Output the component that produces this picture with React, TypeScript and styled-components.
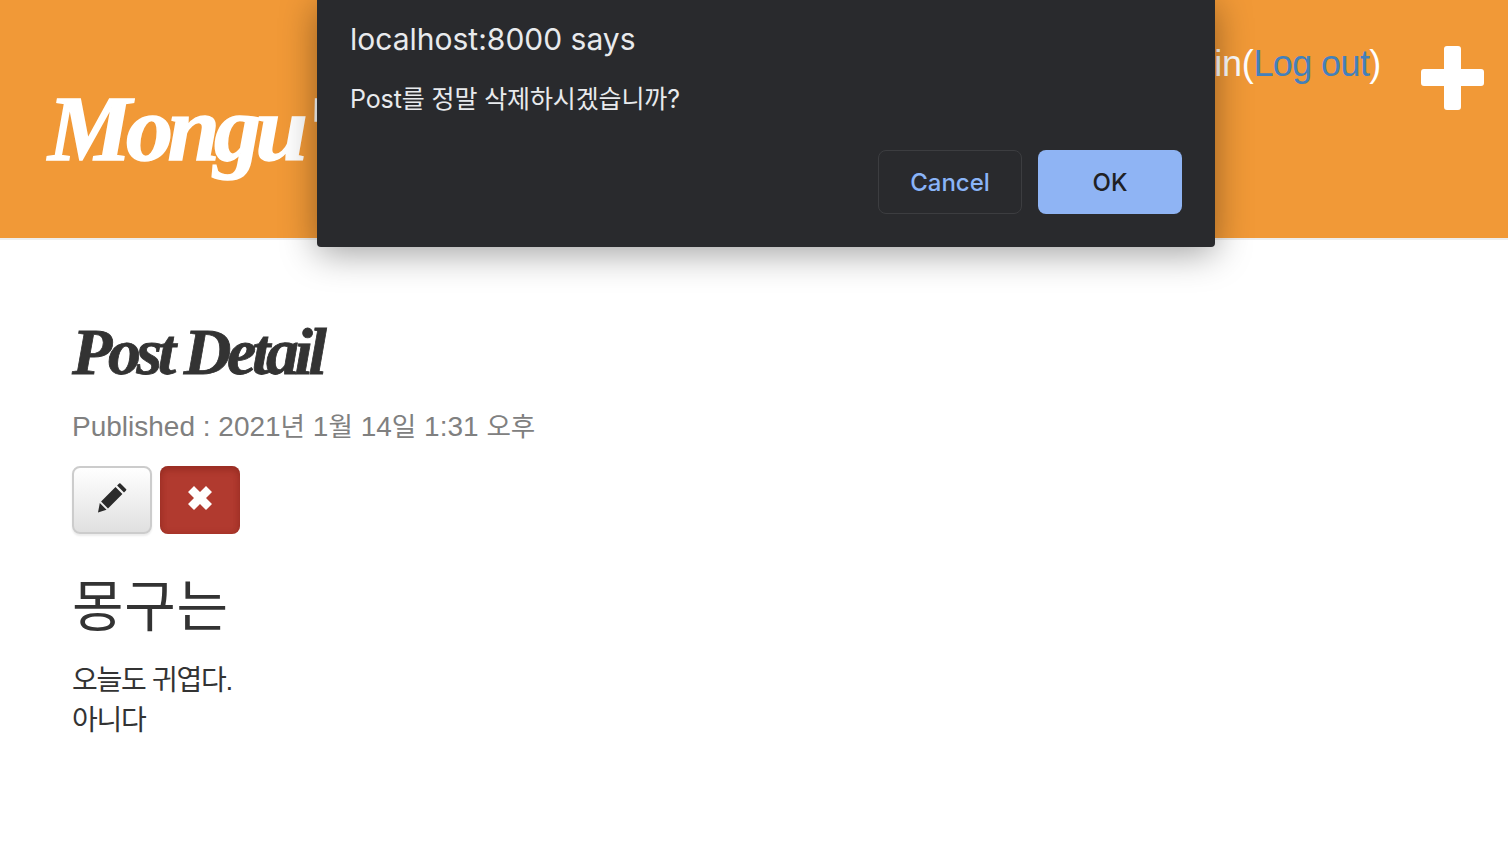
import styled, { createGlobalStyle } from "styled-components";

const GlobalStyle = createGlobalStyle`
  html, body {
    margin: 0;
    padding: 0;
    background: #fff;
    overflow: hidden;
  }
  body {
    font-family: "Liberation Sans", "Noto Sans CJK KR", sans-serif;
    color: #333;
  }
`;

const Page = styled.div`
  position: relative;
  height: 860px;
  overflow: hidden;
`;

const Header = styled.header`
  height: 238px;
  background: #f19937;
  border-bottom: 2px solid #eee;
  display: flex;
  justify-content: space-between;
  align-items: flex-start;
  padding: 0 24px 0 48px;
`;

const Logo = styled.h1`
  margin: 72px 0 0;
  font-family: "Liberation Serif", serif;
  font-style: italic;
  font-weight: 700;
  font-size: 94px;
  line-height: 112px;
  letter-spacing: -5.6px;
  color: #fff;
  -webkit-text-stroke: 1.5px #fff;
  white-space: nowrap;
`;

const UserArea = styled.div`
  display: flex;
  align-items: flex-start;
  gap: 40px;
  padding-top: 46px;
`;

const UserText = styled.div`
  font-size: 36px;
  line-height: 36px;
  letter-spacing: -0.3px;
  color: #fff;
  white-space: nowrap;
`;

const LogoutLink = styled.a`
  color: #4480bb;
  text-decoration: none;
  letter-spacing: -0.6px;
`;

const PlusIcon = styled.svg`
  display: block;
  width: 63px;
  height: 64px;
`;

const Content = styled.main`
  padding: 77px 72px 0;
`;

const Title = styled.h2`
  margin: 0;
  font-family: "Liberation Serif", serif;
  font-style: italic;
  font-weight: 700;
  font-size: 66px;
  line-height: 70px;
  letter-spacing: -4.4px;
  color: #333;
  -webkit-text-stroke: 0.8px #333;
`;

const Published = styled.p`
  margin: 20px 0 19px;
  font-size: 28px;
  line-height: 40px;
  color: #808080;
`;

const Hangul = styled.span`
  font-size: 26.6px;
`;

const ButtonRow = styled.div`
  display: flex;
  gap: 8px;
`;

const PostButton = styled.button<{ $danger?: boolean }>`
  width: 80px;
  height: 68px;
  padding: 0 0 4px;
  display: flex;
  align-items: center;
  justify-content: center;
  box-sizing: border-box;
  border-radius: 8px;
  border: ${(p) => (p.$danger ? "0" : "2px solid #ccc")};
  background: ${(p) =>
    p.$danger ? "#b13a2f" : "linear-gradient(to bottom, #fff, #e0e0e0)"};
  box-shadow: ${(p) =>
    p.$danger
      ? "inset 0 4px 6px rgba(120, 30, 20, 0.35), inset 0 0 6px rgba(120, 30, 20, 0.25)"
      : "0 2px 2px rgba(0, 0, 0, 0.08)"};
`;

const PostHeading = styled.h3`
  margin: 42px 0 23px;
  font-size: 56px;
  font-weight: 400;
  line-height: 62px;
  letter-spacing: 0.7px;
  color: #333;
`;

const PostBody = styled.p`
  margin: 0;
  font-size: 28px;
  line-height: 40px;
  letter-spacing: -1.25px;
  color: #333;
`;

const Dialog = styled.div`
  position: absolute;
  top: 0;
  left: 317px;
  width: 898px;
  height: 247px;
  box-sizing: border-box;
  padding: 19px 33px 33px;
  display: flex;
  flex-direction: column;
  background: #292a2d;
  border-radius: 0 0 4px 4px;
  box-shadow: 0 6px 36px rgba(0, 0, 0, 0.38);
  font-family: Inter, "Noto Sans CJK KR", sans-serif;
`;

const DialogTitle = styled.div`
  font-size: 30px;
  line-height: 40px;
  color: #e8eaed;
`;

const DialogMessage = styled.div`
  margin-top: 21px;
  font-size: 25px;
  line-height: 38px;
  letter-spacing: -0.12px;
  color: #e8eaed;
`;

const DialogActions = styled.div`
  margin-top: auto;
  display: flex;
  justify-content: flex-end;
  gap: 16px;
`;

const DialogButton = styled.button<{ $primary?: boolean }>`
  width: 144px;
  height: 64px;
  box-sizing: border-box;
  border-radius: 8px;
  font-family: Inter, sans-serif;
  font-size: 24px;
  font-weight: 500;
  border: ${(p) => (p.$primary ? "0" : "1px solid #3c3d40")};
  background: ${(p) => (p.$primary ? "#8fb4f4" : "transparent")};
  color: ${(p) => (p.$primary ? "#202124" : "#8ab4f8")};
`;

export default function App() {
  return (
    <Page>
      <GlobalStyle />
      <Header>
        <Logo>Mongu's Blog</Logo>
        <UserArea>
          <UserText>
            Hello admin(<LogoutLink href="#">Log out</LogoutLink>)
          </UserText>
          <PlusIcon viewBox="0 0 63 64">
            <path
              fill="#fff"
              d="M26 0h11a3 3 0 0 1 3 3v20h20a3 3 0 0 1 3 3v11a3 3 0 0 1-3 3H40v21a3 3 0 0 1-3 3H26a3 3 0 0 1-3-3V40H3a3 3 0 0 1-3-3V26a3 3 0 0 1 3-3h20V3a3 3 0 0 1 3-3z"
            />
          </PlusIcon>
        </UserArea>
      </Header>

      <Content>
        <Title>Post Detail</Title>
        <Published>
          Published : 2021<Hangul>년</Hangul> 1<Hangul>월</Hangul> 14
          <Hangul>일</Hangul> 1:31 <Hangul>오후</Hangul>
        </Published>
        <ButtonRow>
          <PostButton>
            <svg width="32" height="32" viewBox="0 0 32 32">
              <path
                fill="#2b2b2b"
                d="M24.5 1.5l5.5 5.5a1 1 0 0 1 0 1.4l-2 2-6.900-6.900 2-2a1 1 0 0 1 1.400 0zM19.500 5.100l6.900 6.900-14.400 14.400-6.900-6.900zM3.800 21l6.700 6.700-8.500 2.800z"
              />
            </svg>
          </PostButton>
          <PostButton $danger>
            <svg width="26" height="26" viewBox="0 0 26 26">
              <path
                fill="#fff"
                d="M7 1l6 6 6-6 6 6-6 6 6 6-6 6-6-6-6 6-6-6 6-6-6-6z"
              />
            </svg>
          </PostButton>
        </ButtonRow>
        <PostHeading>몽구는</PostHeading>
        <PostBody>
          오늘도 귀엽다.
          <br />
          아니다
        </PostBody>
      </Content>

      <Dialog>
        <DialogTitle>localhost:8000 says</DialogTitle>
        <DialogMessage>Post를 정말 삭제하시겠습니까?</DialogMessage>
        <DialogActions>
          <DialogButton>Cancel</DialogButton>
          <DialogButton $primary>OK</DialogButton>
        </DialogActions>
      </Dialog>
    </Page>
  );
}
